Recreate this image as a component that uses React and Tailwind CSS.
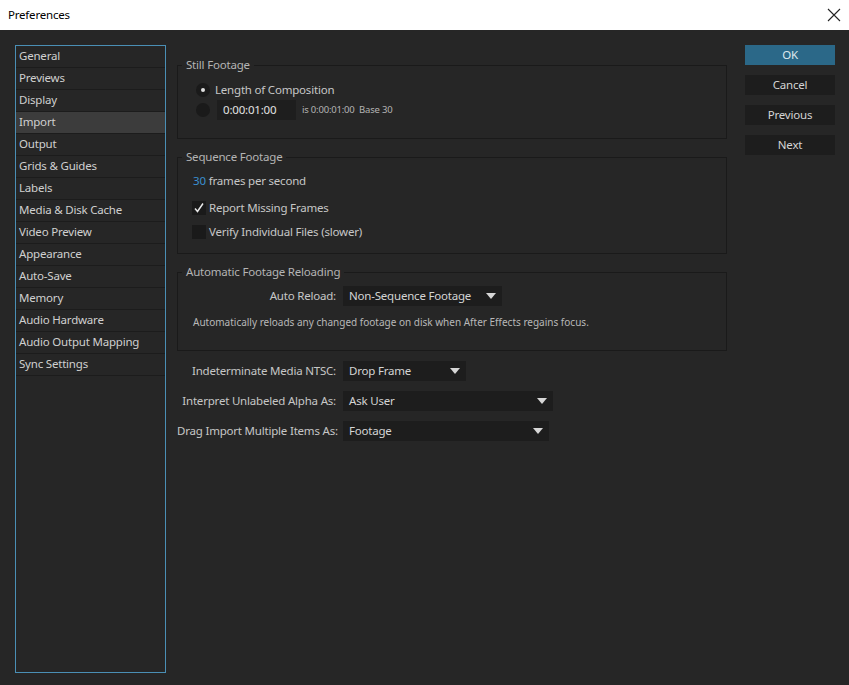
import React from "react";

const font = { fontFamily: '"Noto Sans", "Open Sans", sans-serif', letterSpacing: "-0.2px" };

const items = [
  "General","Previews","Display","Import","Output","Grids & Guides","Labels",
  "Media & Disk Cache","Video Preview","Appearance","Auto-Save","Memory",
  "Audio Hardware","Audio Output Mapping","Sync Settings",
];

function Tri() {
  return (
    <svg width="10" height="6" viewBox="0 0 10 6" className="shrink-0">
      <path d="M0 0 H10 L5 6 Z" fill="#d6d6d6" />
    </svg>
  );
}

function Dropdown({ text, w }) {
  return (
    <div className={`flex h-[20px] items-center justify-between bg-[#1d1d1d] pl-[6px] pr-[6px] text-[#d4d4d4] ${w}`}>
      <span>{text}</span>
      <Tri />
    </div>
  );
}

function Group({ title, className, children }) {
  return (
    <fieldset className={`border border-[#1a1a1a] ${className}`}>
      <legend className="ml-[4px] px-[4px] text-[11.5px] leading-[16px] text-[#b4b4b4]">{title}</legend>
      {children}
    </fieldset>
  );
}

function Check({ on }) {
  return (
    <div className="flex h-[14px] w-[14px] items-center justify-center bg-[#1a1a1a]">
      {on && (
        <svg width="12" height="12" viewBox="0 0 12 12">
          <path d="M2 6.5 L4.5 9.5 L10 1.5" stroke="#e8e8e8" strokeWidth="1.5" fill="none" />
        </svg>
      )}
    </div>
  );
}

export default function App() {
  return (
    <div className="flex h-[685px] w-[849px] flex-col bg-[#262626] text-[11.5px]" style={font}>
      <div className="flex h-[30px] items-center justify-between bg-white pl-[8px] pr-[8px] text-black">
        <span className="text-[11.5px]">Preferences</span>
        <svg width="14" height="14" viewBox="0 0 14 14">
          <path d="M1 1 L13 13 M13 1 L1 13" stroke="#222" strokeWidth="1.1" />
        </svg>
      </div>
      <div className="flex flex-1">
        <div className="ml-[15px] mt-[15px] h-[628px] w-[151px] border border-[#4a8fb5]">
          {items.map((t) => (
            <div
              key={t}
              className={`flex h-[22px] items-center border-b border-[#1c1c1c] pb-[1px] pl-[3px] text-[#d0d0d0] ${t === "Import" ? "bg-[#3c3c3c]" : ""}`}
            >
              {t}
            </div>
          ))}
        </div>
        <div className="ml-[11px] flex w-[550px] flex-col pt-[27px] text-[#c6c6c6]">
          <Group title="Still Footage" className="pb-[18px] pt-[7px]">
            <div className="pl-[18px]">
              <div className="flex h-[20px] items-center">
                <div className="flex h-[14px] w-[14px] items-center justify-center rounded-full bg-[#1a1a1a]">
                  <div className="h-[4px] w-[4px] rounded-full bg-[#e0e0e0]" />
                </div>
                <span className="ml-[5px]">Length of Composition</span>
              </div>
              <div className="flex h-[20px] items-center">
                <div className="h-[14px] w-[14px] rounded-full bg-[#1a1a1a]" />
                <div className="ml-[7px] flex h-[20px] w-[79px] items-center bg-[#1e1e1e] pl-[6px] text-[#e2e2e2]">0:00:01:00</div>
                <span className="ml-[6px] text-[9.5px] text-[#b4b4b4]">is 0:00:01:00&nbsp;&nbsp;Base 30</span>
              </div>
            </div>
          </Group>
          <Group title="Sequence Footage" className="mt-[10px] pb-[11px] pt-[6px]">
            <div className="pl-[14px]">
              <div className="flex h-[20px] items-center pl-[1px]">
                <span className="text-[#3a8fd0]">30</span>
                <span className="ml-[3px]">frames per second</span>
              </div>
              <div className="mt-[7px] flex h-[20px] items-center">
                <Check on />
                <span className="ml-[3px]">Report Missing Frames</span>
              </div>
              <div className="mt-[4px] flex h-[20px] items-center">
                <Check />
                <span className="ml-[3px]">Verify Individual Files (slower)</span>
              </div>
            </div>
          </Group>
          <Group title="Automatic Footage Reloading" className="mt-[10px] pb-[20px] pt-[6px]">
            <div className="flex h-[20px] items-center">
              <span className="w-[158px] text-right">Auto Reload:</span>
              <div className="ml-[7px]">
                <Dropdown text="Non-Sequence Footage" w="w-[159px]" />
              </div>
            </div>
            <div className="mt-[8px] flex h-[16px] items-center pl-[15px] text-[10px] tracking-[0px] text-[#b8b8b8]">
              Automatically reloads any changed footage on disk when After Effects regains focus.
            </div>
          </Group>
          <div className="mt-[10px] flex flex-col gap-[10px]">
            {[
              ["Indeterminate Media NTSC:", "Drop Frame", "w-[123px]"],
              ["Interpret Unlabeled Alpha As:", "Ask User", "w-[210px]"],
              ["Drag Import Multiple Items As:", "Footage", "w-[206px]"],
            ].map(([l, v, w]) => (
              <div key={l} className="flex h-[20px] items-center">
                <span className="w-[159px] whitespace-nowrap text-right">{l}</span>
                <div className="ml-[7px]">
                  <Dropdown text={v} w={w} />
                </div>
              </div>
            ))}
          </div>
        </div>
        <div className="ml-[18px] mt-[15px] flex w-[90px] flex-col gap-[10px] text-[#d4d4d4]">
          <div className="flex h-[20px] items-center justify-center bg-[#2b6888] text-[#dfe8ee]">OK</div>
          <div className="flex h-[20px] items-center justify-center bg-[#1d1d1d]">Cancel</div>
          <div className="flex h-[20px] items-center justify-center bg-[#1d1d1d]">Previous</div>
          <div className="flex h-[20px] items-center justify-center bg-[#1d1d1d]">Next</div>
        </div>
      </div>
    </div>
  );
}
